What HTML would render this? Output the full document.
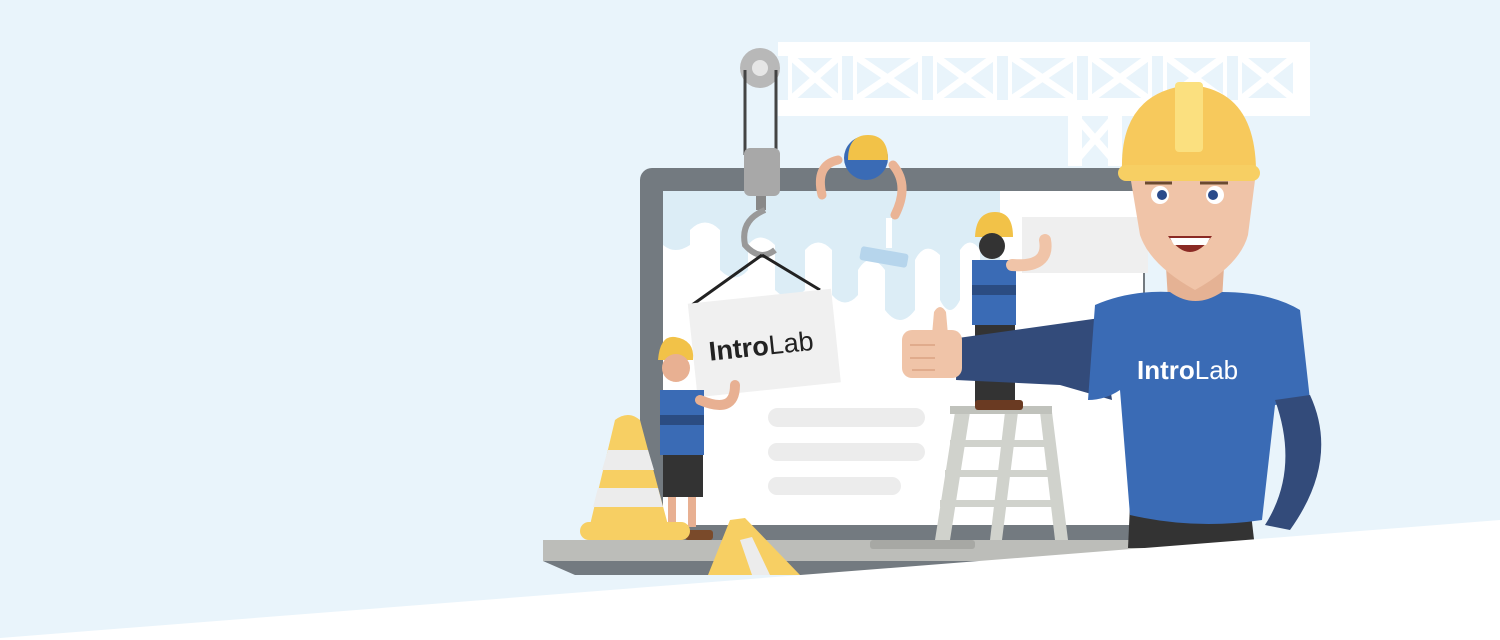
<!DOCTYPE html>
<html><head><meta charset="utf-8"><style>
html,body{margin:0;padding:0;width:1500px;height:640px;overflow:hidden;background:#e9f4fb}
svg{display:block}
text{font-family:"Liberation Sans",sans-serif}
</style></head><body>
<svg width="1500" height="640" viewBox="0 0 1500 640" xmlns="http://www.w3.org/2000/svg">
<rect width="1500" height="640" fill="#e9f4fb"/>
<g fill="#ffffff">
<rect x="778" y="42" width="532" height="14"/>
<rect x="778" y="100" width="532" height="16"/>
<rect x="1296" y="42" width="14" height="74"/>
<rect x="1068" y="116" width="14" height="50"/>
<rect x="1108" y="116" width="14" height="50"/>
</g>
<g stroke="#ffffff" stroke-width="7" fill="none">
<path d="M790 56 L840 100 M840 56 L790 100 M855 56 L920 100 M920 56 L855 100 M935 56 L995 100 M995 56 L935 100 M1010 56 L1075 100 M1075 56 L1010 100 M1090 56 L1150 100 M1150 56 L1090 100 M1165 56 L1225 100 M1225 56 L1165 100 M1240 56 L1295 100 M1295 56 L1240 100 M1075 116 L1115 162 M1115 116 L1075 162"/>
<path d="M790 56 H840 V100 H790Z M855 56 H920 V100 H855Z M935 56 H995 V100 H935Z M1010 56 H1075 V100 H1010Z M1090 56 H1150 V100 H1090Z M1165 56 H1225 V100 H1165Z M1240 56 H1295 V100 H1240Z" stroke-width="4"/>
</g>
<rect x="640" y="168" width="505" height="378" rx="12" fill="#737a80"/>
<rect x="663" y="191" width="480" height="334" fill="#ffffff"/>
<path d="M663 191 H1000 V270 Q990 300 980 270 V250 Q970 235 960 250 V300 Q950 320 940 300 V255 Q925 240 915 260 V310 Q900 330 885 310 V270 Q870 250 858 270 V295 Q845 310 832 295 V250 Q818 235 805 250 V290 Q790 305 775 290 V245 Q760 230 748 245 V270 Q735 285 720 270 V230 Q705 215 690 230 V245 Q675 255 663 245Z" fill="#dcedf6"/>
<rect x="1022" y="217" width="126" height="56" fill="#efefef"/>
<rect x="768" y="408" width="157" height="19" rx="9.5" fill="#ececec"/>
<rect x="768" y="443" width="157" height="18" rx="9" fill="#ececec"/>
<rect x="768" y="477" width="133" height="18" rx="9" fill="#ececec"/>
<rect x="543" y="540" width="600" height="21" fill="#bcbdb9"/>
<path d="M543 561 H1143 L1133 575 H575Z" fill="#737a80"/>
<rect x="870" y="540" width="105" height="9" rx="3" fill="#a7a8a4"/>
<circle cx="760" cy="68" r="20" fill="#b8b8b8"/>
<circle cx="760" cy="68" r="8" fill="#e6e6e6"/>
<line x1="745" y1="70" x2="745" y2="155" stroke="#444" stroke-width="3"/>
<line x1="776" y1="70" x2="776" y2="155" stroke="#444" stroke-width="3"/>
<rect x="744" y="148" width="36" height="48" rx="6" fill="#a8a8a8"/>
<rect x="756" y="196" width="10" height="14" fill="#888"/>
<path d="M765 210 Q740 220 745 245 Q760 262 775 250" stroke="#999" stroke-width="6" fill="none"/>
<path d="M762 255 L692 305 M762 255 L820 290" stroke="#222" stroke-width="3"/>
<g transform="rotate(-6 764 340)">
<rect x="692" y="296" width="144" height="94" fill="#f0f0f0"/>
<text x="708" y="355" font-size="27" font-weight="bold" fill="#222">Intro<tspan font-weight="normal">Lab</tspan></text>
</g>
<circle cx="866" cy="158" r="22" fill="#3a6bb5"/>
<path d="M848 160 Q848 135 868 135 Q888 135 888 160Z" fill="#f2c248"/>
<path d="M838 160 Q815 165 822 195" stroke="#eab496" stroke-width="9" fill="none" stroke-linecap="round"/>
<path d="M893 165 Q910 185 895 215" stroke="#eab496" stroke-width="9" fill="none" stroke-linecap="round"/>
<rect x="886" y="218" width="6" height="30" fill="#fff"/>
<rect x="860" y="250" width="48" height="14" rx="3" fill="#b6d5ec" transform="rotate(10 884 257)"/>
<path d="M658 360 Q660 335 675 337 Q695 340 693 360Z" fill="#f2c248"/>
<circle cx="676" cy="368" r="14" fill="#e8b092"/>
<rect x="660" y="390" width="44" height="65" fill="#3a6bb5"/>
<rect x="660" y="415" width="44" height="10" fill="#2b4c82"/>
<rect x="663" y="455" width="40" height="42" fill="#333"/>
<rect x="668" y="497" width="8" height="30" fill="#e8b092"/><rect x="688" y="497" width="8" height="30" fill="#e8b092"/>
<path d="M700 400 Q735 415 735 385" stroke="#e8b092" stroke-width="10" fill="none" stroke-linecap="round"/>
<rect x="685" y="530" width="28" height="10" rx="3" fill="#7a4a2a"/>
<path d="M615 420 Q628 410 640 420 L668 525 H590Z" fill="#f7cf63"/>
<path d="M608 450 H648 L654 470 H602Z M598 488 H658 L663 507 H593Z" fill="#ececec"/>
<rect x="580" y="522" width="110" height="18" rx="9" fill="#f7cf63"/>
<path d="M730 520 L745 518 L800 575 H708Z" fill="#f7cf63"/>
<path d="M740 540 L752 537 L770 575 H752Z" fill="#ececec"/>
<g fill="#d0d2cc">
<path d="M955 412 H970 L950 540 H935Z"/><path d="M1040 412 H1052 L1068 540 H1055Z"/>
<path d="M1005 412 H1018 L1002 540 H990Z"/>
<rect x="950" y="440" width="95" height="7"/><rect x="945" y="470" width="105" height="7"/><rect x="940" y="500" width="115" height="7"/>
</g>
<rect x="950" y="406" width="102" height="8" fill="#c0c2bc"/>
<path d="M975 237 Q976 212 995 212 Q1013 212 1013 237Z" fill="#f2c248"/>
<circle cx="992" cy="246" r="13" fill="#333"/>
<rect x="972" y="260" width="44" height="65" fill="#3a6bb5"/>
<rect x="972" y="285" width="44" height="10" fill="#2b4c82"/>
<rect x="975" y="325" width="40" height="80" fill="#333"/>
<rect x="975" y="400" width="48" height="10" rx="3" fill="#6a3a22"/>
<path d="M1012 265 Q1050 268 1045 240" stroke="#f0c4a8" stroke-width="12" fill="none" stroke-linecap="round"/>
<!-- big man -->
<path d="M1130 505 H1250 L1255 548 H1128Z" fill="#333"/>
<path d="M1165 250 H1225 L1222 300 Q1195 330 1168 300Z" fill="#e5b294"/>
<path d="M1100 318 L958 338 L956 380 L1060 385 L1112 400Z" fill="#334b7a"/>
<path d="M1095 305 Q1130 290 1170 292 Q1195 310 1222 292 Q1270 292 1300 310 L1310 400 L1275 405 L1262 520 Q1195 530 1130 515 L1120 390 Q1105 400 1088 400 Z" fill="#3a6bb5"/>
<path d="M1275 400 L1310 395 Q1340 460 1290 530 L1265 525 Q1300 470 1275 400Z" fill="#334b7a"/>
<path d="M932 335 L934 312 Q940 302 946 312 L948 335Z" fill="#f0c4a8"/>
<rect x="902" y="330" width="60" height="48" rx="10" fill="#f0c4a8"/>
<path d="M910 345 H935 M910 358 H935 M912 370 H935" stroke="#e0ab8c" stroke-width="2"/>
<text x="1137" y="379" font-size="26" font-weight="bold" fill="#fff">Intro<tspan font-weight="normal">Lab</tspan></text>
<path d="M1130 175 Q1130 150 1145 150 H1240 Q1255 150 1255 180 L1248 235 Q1240 265 1195 290 Q1150 265 1140 235Z" fill="#f0c4a8"/>
<circle cx="1160" cy="195" r="9" fill="#fff"/><circle cx="1162" cy="195" r="5" fill="#2a4a8a"/>
<circle cx="1215" cy="195" r="9" fill="#fff"/><circle cx="1213" cy="195" r="5" fill="#2a4a8a"/>
<path d="M1145 183 H1172 M1200 183 H1228" stroke="#6b4a30" stroke-width="3"/>
<path d="M1168 236 Q1190 268 1212 236Z" fill="#8a2a24"/>
<path d="M1170 238 H1210 L1206 245 H1174Z" fill="#fff"/>
<path d="M1122 170 Q1120 92 1190 85 Q1255 90 1256 170Z" fill="#f7c95c"/>
<rect x="1175" y="82" width="28" height="70" rx="4" fill="#fbe07f"/>
<rect x="1118" y="165" width="142" height="16" rx="8" fill="#f7cf63"/>
<path d="M0 638 L1500 520 V640 H0Z" fill="#ffffff"/>
</svg>
</body></html>
